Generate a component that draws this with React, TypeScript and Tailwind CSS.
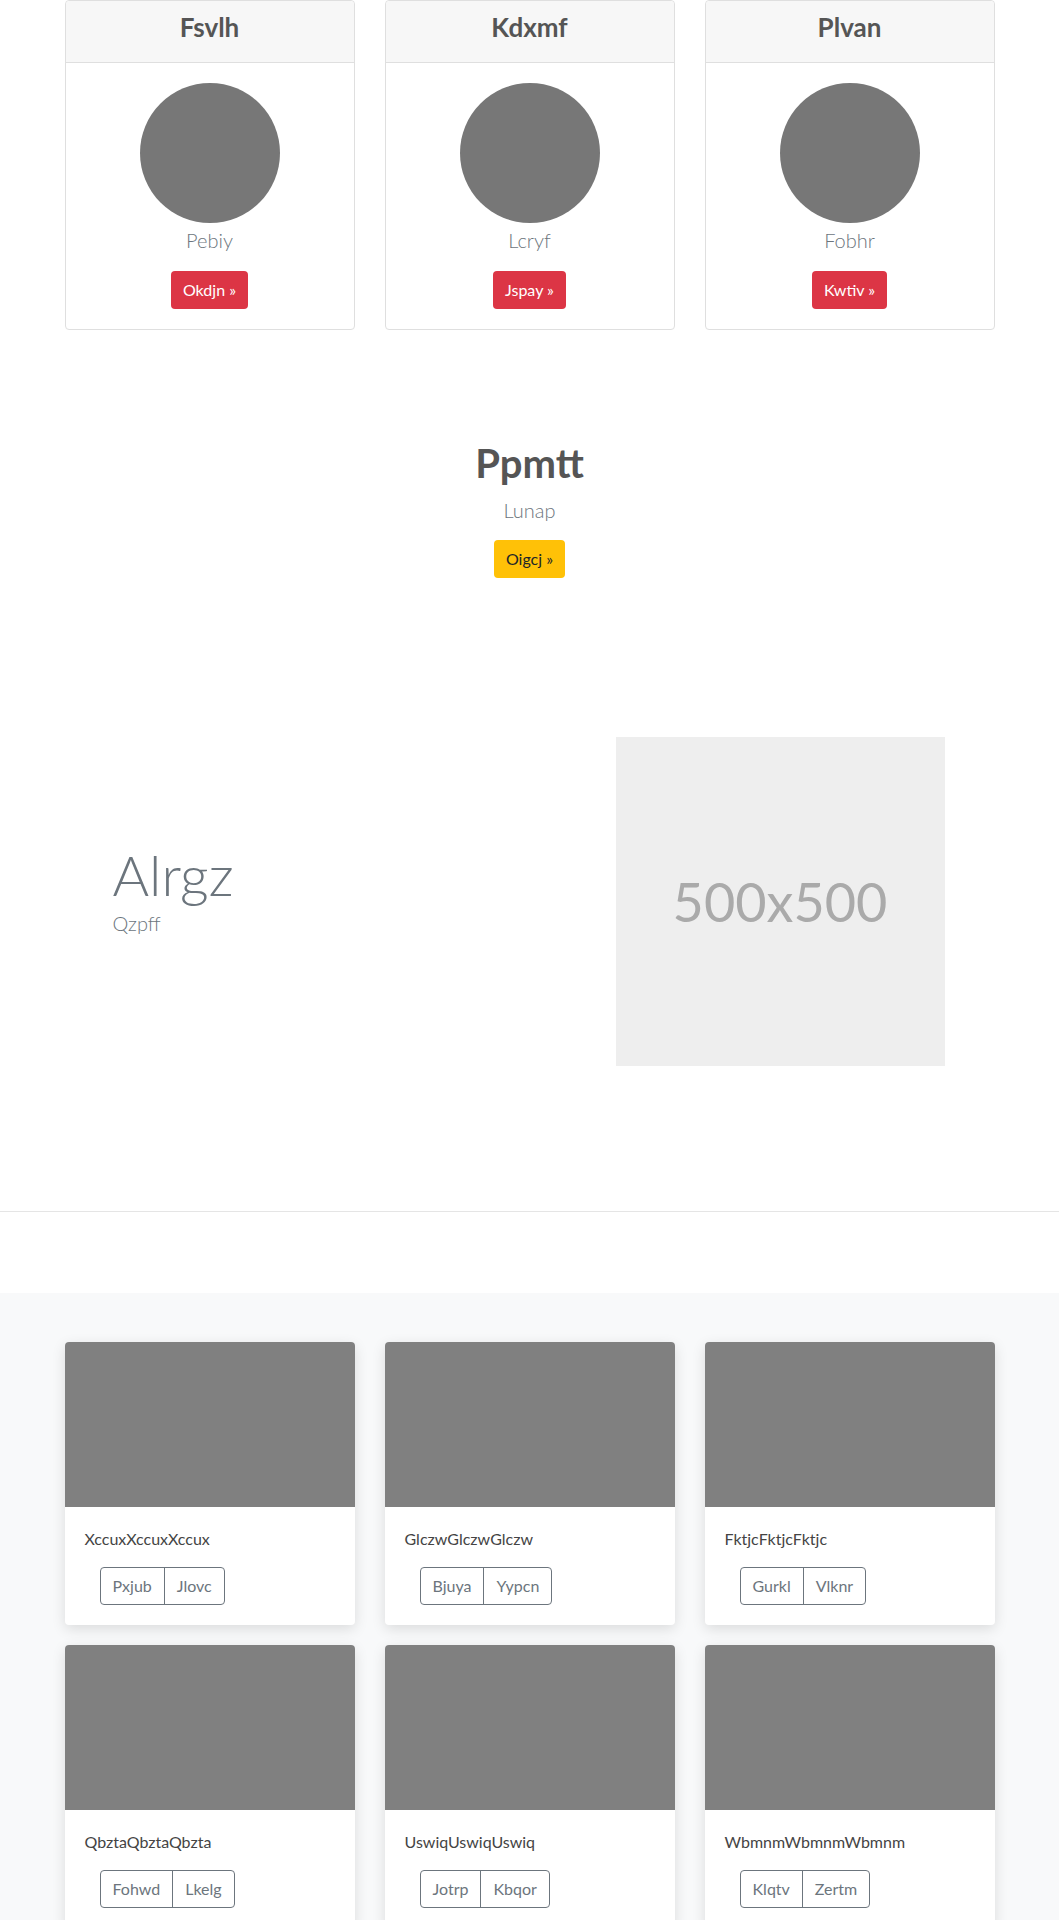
import React from "react";

const font = "font-['Lato','Open_Sans',sans-serif]";

const profiles = [
  { title: "Fsvlh", name: "Pebiy", action: "Okdjn" },
  { title: "Kdxmf", name: "Lcryf", action: "Jspay" },
  { title: "Plvan", name: "Fobhr", action: "Kwtiv" },
];

const albums = [
  { text: "XccuxXccuxXccux", a: "Pxjub", b: "Jlovc" },
  { text: "GlczwGlczwGlczw", a: "Bjuya", b: "Yypcn" },
  { text: "FktjcFktjcFktjc", a: "Gurkl", b: "Vlknr" },
  { text: "QbztaQbztaQbzta", a: "Fohwd", b: "Lkelg" },
  { text: "UswiqUswiqUswiq", a: "Jotrp", b: "Kbqor" },
  { text: "WbmnmWbmnmWbmnm", a: "Klqtv", b: "Zertm" },
];

const ProfileCard = ({ title, name, action }: { title: string; name: string; action: string }) => (
  <div className="rounded border border-[#dfdfdf] bg-white text-center">
    <div className="flex h-[62px] items-center justify-center rounded-t border-b border-[#dfdfdf] bg-[#f7f7f7]">
      <h4 className="-mt-2 text-[26px] font-bold text-[#555]">{title}</h4>
    </div>
    <div className="flex flex-col items-center p-5">
      <div className="size-[140px] rounded-full bg-[#777]" />
      <p className="mt-0.5 text-xl leading-[30px] font-light text-[#6c757d]">{name}</p>
      <button className="mt-4 h-[38px] rounded bg-[#dc3545] px-3 text-base text-white">
        {action} »
      </button>
    </div>
  </div>
);

const AlbumCard = ({ text, a, b }: { text: string; a: string; b: string }) => (
  <div className="overflow-hidden rounded bg-white shadow-[0_4px_14px_rgba(0,0,0,0.12)]">
    <div className="h-[165px] bg-[#808080]" />
    <div className="p-5">
      <p className="text-base leading-6 text-[#444]">{text}</p>
      <div className="mt-4 ml-[15px] inline-flex overflow-hidden rounded border border-[#6c757d] text-[#6c757d]">
        <button className="h-[36px] px-3 text-base">{a}</button>
        <button className="h-[36px] border-l border-[#6c757d] px-3 text-base">{b}</button>
      </div>
    </div>
  </div>
);

const App = () => {
  return (
    <div className={`${font} min-h-screen bg-white`}>
      {/* tarjetas de perfil */}
      <div className="mx-auto grid w-[930px] grid-cols-3 gap-[30px]">
        {profiles.map((p) => (
          <ProfileCard key={p.title} {...p} />
        ))}
      </div>

      {/* bloque central */}
      <div className="mt-[109px] flex flex-col items-center">
        <h1 className="text-[40px] leading-[48px] font-bold text-[#555]">Ppmtt</h1>
        <p className="mt-2 text-xl leading-[30px] font-light text-[#6c757d]">Lunap</p>
        <button className="mt-[15px] h-[38px] rounded bg-[#ffc107] px-3 text-base text-[#212529]">
          Oigcj »
        </button>
      </div>

      {/* destacado con imagen */}
      <div className="mx-auto mt-[159px] flex w-[930px] items-center">
        <div className="w-[465px] pl-12">
          <h1 className="text-[56px] leading-[67px] font-light text-[#6c757d]">Alrgz</h1>
          <p className="mb-6 text-xl leading-[30px] font-light text-[#6c757d]">Qzpff</p>
        </div>
        <div className="flex-1 pl-[86px]">
          <div className="flex size-[329px] items-center justify-center bg-[#eee] text-[54px] text-[#aaa]">
            500x500
          </div>
        </div>
      </div>

      <hr className="mt-[145px] border-t border-[#e5e5e5]" />

      {/* album */}
      <div className="mt-[81px] bg-[#f8f9fa] pt-[49px] pb-12">
        <div className="mx-auto grid w-[930px] grid-cols-3 gap-x-[30px] gap-y-5">
          {albums.map((a) => (
            <AlbumCard key={a.text} {...a} />
          ))}
        </div>
      </div>
    </div>
  );
};

export default App;
